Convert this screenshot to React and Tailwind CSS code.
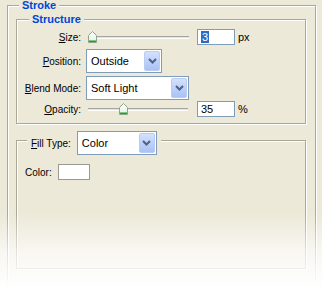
import React from 'react';

// etched group box line: grey with a white line inside/outside
const etched = 'border border-[#ACA899] shadow-[1px_1px_0_#fff,inset_1px_1px_0_#fff]';

function Chevron() {
  return (
    <svg width="9" height="6" viewBox="0 0 9 6">
      <path d="M1 1 L4.5 4.5 L8 1" fill="none" stroke="#4D6185" strokeWidth="2" />
    </svg>
  );
}

function Select({ value, width }) {
  return (
    <div
      className="flex items-stretch h-[24px] border border-[#7F9DB9] bg-white p-[1px]"
      style={{ width }}
    >
      <div className="flex-1 flex items-center pl-[3px] text-[11px]">{value}</div>
      <div className="w-[16px] flex items-center justify-center rounded-[2px] border border-[#B9CCF5] bg-linear-to-b from-[#D4E1FD] to-[#A9C1F5]">
        <Chevron />
      </div>
    </div>
  );
}

function Thumb() {
  return (
    <svg width="9" height="12" viewBox="0 0 9 12">
      <defs>
        <linearGradient id="thumbfill" x1="0" y1="0" x2="0" y2="1">
          <stop offset="0" stopColor="#ffffff" />
          <stop offset="1" stopColor="#E3F0E3" />
        </linearGradient>
      </defs>
      <path d="M0.5 4.5 L4.5 0.5 L8.5 4.5 L8.5 11.5 L0.5 11.5 Z" fill="url(#thumbfill)" stroke="#8FA58F" />
      <path d="M1 10.5 H8" stroke="#21A121" />
      <path d="M1 9.5 H8" stroke="#7CCB7C" />
    </svg>
  );
}

function Slider({ width, thumb }) {
  return (
    <div className="relative h-[12px] flex items-center" style={{ width }}>
      <div className="w-full h-[3px] border-t border-[#A8A79E] border-b border-b-white bg-[#E4E2D6]" />
      <div className="absolute top-0" style={{ left: thumb }}>
        <Thumb />
      </div>
    </div>
  );
}

function TextBox({ children }) {
  return (
    <div className="w-[38px] h-[16px] border border-[#7F9DB9] bg-white flex items-center pl-[3px] text-[11px]">
      {children}
    </div>
  );
}

function Label({ u, rest }) {
  return (
    <span className="w-[64px] text-right shrink-0">
      <span className="underline underline-offset-1">{u}</span>
      {rest}
    </span>
  );
}

function Legend({ children, className }) {
  return (
    <span className={`absolute bg-[#ECE9D8] px-[3px] font-bold text-[11px] text-[#0046D5] leading-[13px] ${className}`}>
      {children}
    </span>
  );
}

export default function App() {
  return (
    <div className="relative w-[322px] h-[288px] overflow-hidden bg-[#ECE9D8] pl-[7px] pt-[5px] text-[10px] text-black font-['Liberation_Sans',Arial,sans-serif]">
      <div className={`relative w-[309px] h-[300px] ${etched} pl-[8px] pt-[13px]`}>
        <Legend className="-top-[7px] left-[11px]">Stroke</Legend>

        {/* Structure */}
        <div className={`relative w-[290px] h-[105px] ${etched} pt-[9px]`}>
          <Legend className="-top-[7px] left-[12px]">Structure</Legend>

          <div className="flex items-center h-[16px]">
            <Label u="S" rest="ize:" />
            <div className="ml-[7px]">
              <Slider width={101} thumb={0} />
            </div>
            <div className="ml-[8px]">
              <TextBox>
                <span className="bg-[#316AC5] text-white px-[1px] leading-[12px]">3</span>
              </TextBox>
            </div>
            <span className="ml-[3px] text-[11px]">px</span>
          </div>

          <div className="flex items-center mt-[4px]">
            <Label u="P" rest="osition:" />
            <div className="ml-[5px]">
              <Select value="Outside" width={76} />
            </div>
          </div>

          <div className="flex items-center mt-[3px]">
            <Label u="B" rest="lend Mode:" />
            <div className="ml-[5px]">
              <Select value="Soft Light" width={103} />
            </div>
          </div>

          <div className="flex items-center h-[16px] mt-[1px]">
            <Label u="O" rest="pacity:" />
            <div className="ml-[7px]">
              <Slider width={100} thumb={31} />
            </div>
            <div className="ml-[9px]">
              <TextBox>35</TextBox>
            </div>
            <span className="ml-[3px] text-[11px]">%</span>
          </div>
        </div>

        {/* Fill type */}
        <div className={`relative w-[290px] h-[129px] mt-[16px] ${etched} pl-[8px] pt-[23px]`}>
          <div className="absolute -top-[10px] left-[10px] flex items-center gap-[6px] bg-[#ECE9D8] px-[4px]">
            <span>
              <span className="underline underline-offset-1">F</span>ill Type:
            </span>
            <Select value="Color" width={80} />
          </div>

          <div className="flex items-center">
            <span className="w-[33px]">Color:</span>
            <div className="w-[32px] h-[16px] border border-[#9A9A94] bg-white" />
          </div>
        </div>
      </div>

      {/* bottom fade */}
      <div className="absolute left-0 right-0 bottom-0 h-[75px] bg-linear-to-b from-[#ffffff00] via-[#ffffffa0] to-white pointer-events-none" />
    </div>
  );
}
